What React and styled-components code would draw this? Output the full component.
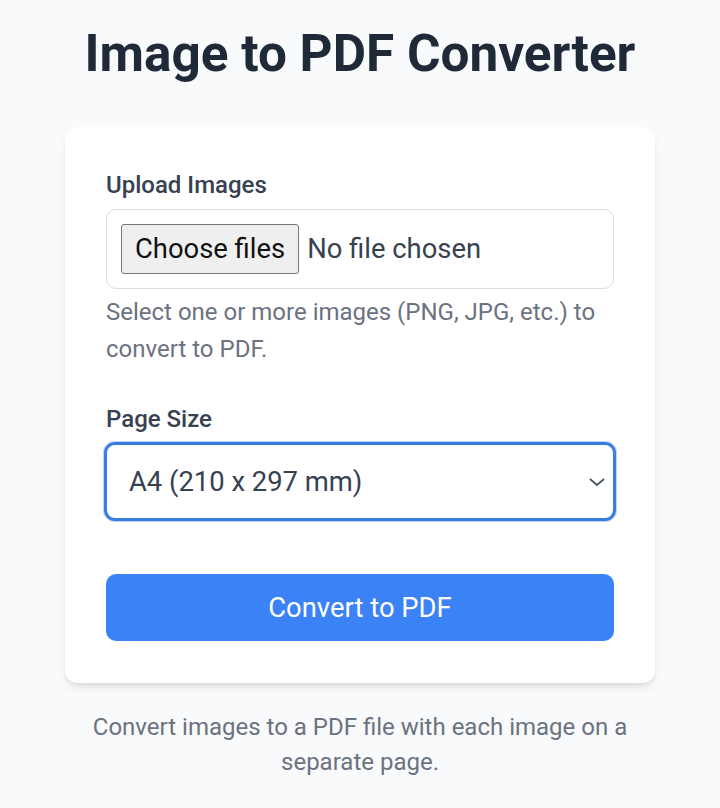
import React from "react";
import styled, { createGlobalStyle } from "styled-components";

const GlobalStyle = createGlobalStyle`
  * {
    box-sizing: border-box;
  }
  body {
    margin: 0;
    background: #f9fafb;
    font-family: Roboto, "Noto Sans", "Liberation Sans", sans-serif;
    color: #1f2937;
  }
`;

const Page = styled.main`
  max-width: 720px;
  margin: 0 auto;
  padding: 22px 65px 30px;
  display: flex;
  flex-direction: column;
  align-items: stretch;
`;

const Title = styled.h1`
  margin: 0 0 41px;
  text-align: center;
  font-size: 51.3px;
  font-weight: 700;
  line-height: 64px;
  color: #1f2937;
`;

const Card = styled.section`
  background: #ffffff;
  border-radius: 13px;
  box-shadow: 0 6px 10px -2px rgba(0, 0, 0, 0.1), 0 3px 6px -3px rgba(0, 0, 0, 0.08);
  padding: 41px 41px 42px;
  display: flex;
  flex-direction: column;
`;

const Field = styled.div`
  display: flex;
  flex-direction: column;
  margin-bottom: ${(p) => p.$gap || 0}px;
`;

const Label = styled.label`
  font-size: 24px;
  font-weight: 500;
  line-height: 34px;
  color: #374151;
  margin-bottom: 7px;
`;

const FileBox = styled.div`
  display: flex;
  align-items: center;
  gap: 8px;
  height: 80px;
  padding: 0 14px;
  border: 1.5px solid #d9dce1;
  border-radius: 10px;
  font-size: 27.4px;
  color: #374151;
`;

const FileButton = styled.button`
  height: 50px;
  padding: 0 13px;
  font-family: inherit;
  font-size: 27.4px;
  color: #111111;
  background: #efefef;
  border: 1.5px solid #767676;
  border-radius: 3px;
`;

const HiddenInput = styled.input`
  display: none;
`;

const Help = styled.p`
  margin: 5px 0 0;
  font-size: 24px;
  line-height: 37px;
  color: #6b7280;
`;

const SelectWrap = styled.div`
  position: relative;
  margin-top: -1px;
`;

const Select = styled.select`
  width: 512px;
  margin-left: -2px;
  height: 79px;
  appearance: none;
  padding: 0 50px 0 22px;
  font-family: inherit;
  font-size: 27.4px;
  color: #374151;
  background: #ffffff;
  border: 3px solid #3b7dde;
  border-radius: 11px;
  box-shadow: 0 0 0 1px rgba(59, 130, 246, 0.35);
  outline: none;
`;

const Chevron = styled.svg`
  position: absolute;
  right: 8px;
  top: 50%;
  transform: translateY(-50%);
  pointer-events: none;
`;

const Convert = styled.button`
  height: 67px;
  margin-top: 53px;
  border: none;
  border-radius: 10px;
  background: #3b82f6;
  color: #ffffff;
  font-family: inherit;
  font-size: 27.4px;
  cursor: pointer;
`;

const Footer = styled.p`
  margin: 27px 0 0;
  text-align: center;
  font-size: 24px;
  line-height: 35px;
  color: #6b7280;
`;

export default function App() {
  return (
    <>
      <GlobalStyle />
      <Page>
        <Title>Image to PDF Converter</Title>
        <Card>
          <Field $gap={34}>
            <Label htmlFor="images">Upload Images</Label>
            <FileBox>
              <FileButton type="button">Choose files</FileButton>
              <span>No file chosen</span>
              <HiddenInput id="images" type="file" multiple accept="image/*" />
            </FileBox>
            <Help>Select one or more images (PNG, JPG, etc.) to convert to PDF.</Help>
          </Field>
          <Field>
            <Label htmlFor="size">Page Size</Label>
            <SelectWrap>
              <Select id="size" defaultValue="a4">
                <option value="a4">A4 (210 x 297 mm)</option>
                <option value="letter">Letter (8.5 x 11 in)</option>
              </Select>
              <Chevron width="18" height="10" viewBox="0 0 18 10">
                <path d="M2 2 L9 8 L16 2" fill="none" stroke="#4b5563" strokeWidth="1.8" />
              </Chevron>
            </SelectWrap>
          </Field>
          <Convert type="button">Convert to PDF</Convert>
        </Card>
        <Footer>Convert images to a PDF file with each image on a separate page.</Footer>
      </Page>
    </>
  );
}
